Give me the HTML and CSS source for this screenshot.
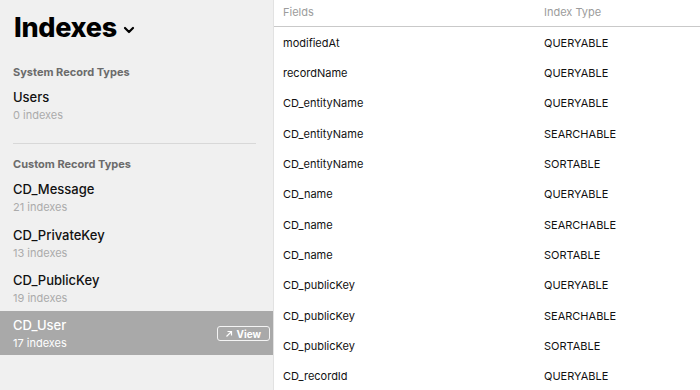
FILE: index.html
```html
<!DOCTYPE html>
<html>
<head>
<meta charset="utf-8">
<link rel="stylesheet" href="styles.css">
</head>
<body>
<div class="app">
  <aside class="sidebar">
    <h1 class="title">Indexes
      <svg class="chev" width="12" height="8" viewBox="0 0 12 8"><path d="M2 2 L6 6 L10 2" fill="none" stroke="#000" stroke-width="2.2" stroke-linecap="round" stroke-linejoin="round"/></svg>
    </h1>
    <div class="section-label first">System Record Types</div>
    <div class="item"><div class="name">Users</div><div class="count">0 indexes</div></div>
    <div class="divider"></div>
    <div class="section-label">Custom Record Types</div>
    <div class="item"><div class="name">CD_Message</div><div class="count">21 indexes</div></div>
    <div class="item"><div class="name">CD_PrivateKey</div><div class="count">13 indexes</div></div>
    <div class="item"><div class="name">CD_PublicKey</div><div class="count">19 indexes</div></div>
    <div class="item selected">
      <div><div class="name">CD_User</div><div class="count">17 indexes</div></div>
      <span class="view-btn"><svg width="8" height="8" viewBox="0 0 8 8"><path d="M1.5 6.5 L6.5 1.5 M2.5 1.5 H6.5 V5.5" fill="none" stroke="#fff" stroke-width="1.2"/></svg>View</span>
    </div>
  </aside>
  <main class="table">
    <div class="row head"><span class="f">Fields</span><span class="t">Index Type</span></div>
    <div class="row"><span class="f">modifiedAt</span><span class="t">QUERYABLE</span></div>
    <div class="row"><span class="f">recordName</span><span class="t">QUERYABLE</span></div>
    <div class="row"><span class="f">CD_entityName</span><span class="t">QUERYABLE</span></div>
    <div class="row"><span class="f">CD_entityName</span><span class="t">SEARCHABLE</span></div>
    <div class="row"><span class="f">CD_entityName</span><span class="t">SORTABLE</span></div>
    <div class="row"><span class="f">CD_name</span><span class="t">QUERYABLE</span></div>
    <div class="row"><span class="f">CD_name</span><span class="t">SEARCHABLE</span></div>
    <div class="row"><span class="f">CD_name</span><span class="t">SORTABLE</span></div>
    <div class="row"><span class="f">CD_publicKey</span><span class="t">QUERYABLE</span></div>
    <div class="row"><span class="f">CD_publicKey</span><span class="t">SEARCHABLE</span></div>
    <div class="row"><span class="f">CD_publicKey</span><span class="t">SORTABLE</span></div>
    <div class="row"><span class="f">CD_recordId</span><span class="t">QUERYABLE</span></div>
  </main>
</div>
</body>
</html>
```

FILE: styles.css
```css
* { box-sizing: border-box; }
html, body { margin: 0; padding: 0; }
body {
  width: 700px; height: 390px; overflow: hidden;
  font-family: Inter, "Helvetica Neue", Arial, sans-serif;
  background: #fff; color: #000;
}
.app { display: flex; height: 390px; }
.sidebar {
  width: 274px; flex: none; background: #f0f0f0;
  border-right: 1px solid #e2e2e2;
  padding-top: 13px;
}
.title {
  margin: 0 0 0 14px; font-size: 27px; font-weight: 800; letter-spacing: -0.3px;
  height: 30px; line-height: 30px; display: flex; align-items: center; gap: 6px;
}
.chev { margin-top: 4px; }
.section-label {
  margin: 0 13px 4px; font-size: 11px; font-weight: 700; color: #6b6b6b;
  height: 14px; line-height: 14px;
}
.section-label.first { margin-top: 22px; }
.item {
  padding: 5px 13px 0; height: 45.3px;
  display: flex; flex-direction: column;
}
.name { font-size: 13px; font-weight: 500; height: 18px; line-height: 18px; color: #111; }
.count { font-size: 11px; color: #ababab; height: 17px; line-height: 17px; margin-top: 1px; }
.divider { height: 1px; background: #d8d8d8; margin: 15px 17px 13px 13px; }
.item.selected {
  background: #a9a9a9; flex-direction: row; align-items: flex-start; justify-content: space-between;
  padding: 5px 3px 0 13px; height: 44px;
}
.item.selected .name, .item.selected .count { color: #fff; }
.view-btn {
  display: inline-flex; align-items: center; gap: 4px;
  border: 1.5px solid #f4f4f4; border-radius: 3px;
  color: #fff; font-size: 10px; font-weight: 700;
  height: 15px; padding: 0 8px 0 7px; margin-top: 10px;
}
.table { flex: 1; }
.row {
  display: flex; height: 30.3px; align-items: center;
  font-size: 11px; color: #111;
}
.row .f { width: 270px; padding-left: 9px; }
.row.head {
  height: 27px; color: #9c9c9c; border-bottom: 1px solid #c9c9c9;
  padding-bottom: 3px;
}
.row.head + .row { height: 31px; padding-top: 1px; }
```
